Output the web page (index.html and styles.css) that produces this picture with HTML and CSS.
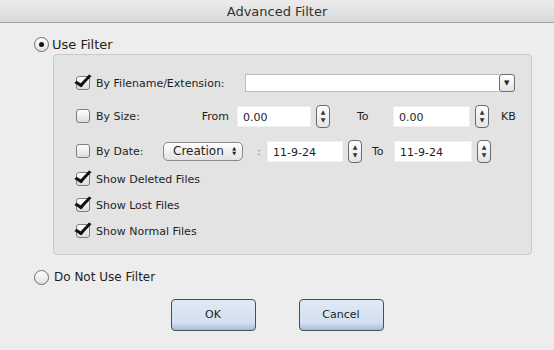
FILE: index.html
```html
<!DOCTYPE html>
<html>
<head>
<meta charset="utf-8">
<title>Advanced Filter</title>
<link rel="stylesheet" href="styles.css">
</head>
<body>
<div class="window">
    <div class="titlebar">Advanced Filter</div>
    <div class="content">
        <div class="radio-row radio-on">
            <span class="radio on"></span><span class="radio-text">Use Filter</span>
        </div>

        <div class="panel">
            <!-- filename -->
            <div class="row row-name">
                <span class="check on"></span>
                <span class="lbl">By Filename/Extension:</span>
                <div class="combo">
                    <span class="combo-field"></span>
                    <span class="combo-btn">&#9660;</span>
                </div>
            </div>
            <!-- size -->
            <div class="row row-size">
                <span class="check"></span>
                <span class="lbl lbl-short">By Size:</span>
                <span class="from">From</span>
                <span class="field field-from">0.00</span>
                <span class="spin"><i>&#9650;</i><i>&#9660;</i></span>
                <span class="to to-size">To</span>
                <span class="field field-to">0.00</span>
                <span class="spin"><i>&#9650;</i><i>&#9660;</i></span>
                <span class="unit">KB</span>
            </div>
            <!-- date -->
            <div class="row row-date">
                <span class="check"></span>
                <span class="lbl lbl-short">By Date:</span>
                <span class="select">Creation<b>&#9650;<br>&#9660;</b></span>
                <span class="colon">:</span>
                <span class="field field-date">11-9-24</span>
                <span class="spin"><i>&#9650;</i><i>&#9660;</i></span>
                <span class="to to-date">To</span>
                <span class="field field-date2">11-9-24</span>
                <span class="spin"><i>&#9650;</i><i>&#9660;</i></span>
            </div>
            <div class="row row-opt first">
                <span class="check on"></span><span class="lbl">Show Deleted Files</span>
            </div>
            <div class="row row-opt">
                <span class="check on"></span><span class="lbl">Show Lost Files</span>
            </div>
            <div class="row row-opt">
                <span class="check on"></span><span class="lbl">Show Normal Files</span>
            </div>
        </div>

        <div class="radio-row radio-off">
            <span class="radio"></span><span class="radio-text">Do Not Use Filter</span>
        </div>

        <div class="buttons">
            <span class="btn">OK</span>
            <span class="btn">Cancel</span>
        </div>
    </div>
</div>
</body>
</html>
```
FILE: styles.css
```css
body{margin:0;padding:0;background:#ececec;font-family:"DejaVu Sans","Liberation Sans",sans-serif;color:#1e1e1e;}
.window{width:554px;height:350px;background:#ededed;overflow:hidden;}

.titlebar{height:22px;line-height:23px;text-align:center;font-size:13px;color:#333;background:linear-gradient(#ececec,#d9d9d9);border-bottom:1px solid #a3a3a3;}

.content{padding:13px 0 0 34px;}

.radio-row{display:flex;align-items:center;height:16px;font-size:12px;}
.radio-on{font-size:13px;}
.radio{display:inline-block;box-sizing:border-box;width:15px;height:15px;border:1px solid #6b6b6b;border-radius:50%;background:linear-gradient(#fff,#e0e0e0);position:relative;margin-right:3px;}
.radio.on:after{content:"";position:absolute;left:4px;top:4px;width:5px;height:5px;border-radius:50%;background:#111;}
.radio-off{margin-top:14px;}
.radio-off .radio{margin-right:5px;}

.panel{box-sizing:border-box;width:479px;height:201px;margin:2px 0 0 19px;background:#e3e3e3;border:1px solid #c9c9c9;border-radius:4px;padding:16px 0 0 22px;font-size:11px;}

.row{display:flex;align-items:center;height:24px;}
.row-size{margin-top:9px;}
.row-date{margin-top:11px;}
.row-opt{height:20px;margin-top:6px;}
.row-opt.first{margin-top:6px;}

.check{display:inline-block;box-sizing:border-box;width:14px;height:14px;border:1px solid #7d7d7d;border-radius:3px;background:linear-gradient(#fff,#dcdcdc);position:relative;margin-right:6px;flex:none;}
.check.on:after{content:"";position:absolute;left:2px;top:-5px;width:5px;height:12px;border:solid #111;border-width:0 3px 3px 0;transform:rotate(33deg) skewX(-10deg);}

.lbl{white-space:nowrap;}
.lbl-short{width:67px;}

.combo{display:flex;margin-left:20px;height:18px;}
.combo-field{width:253px;background:#fff;border:1px solid #bcbcbc;border-right:0;}
.combo-btn{box-sizing:border-box;width:16px;height:18px;border:1px solid #6e6e6e;border-radius:3px;background:linear-gradient(#fff,#e2e2e2);font-size:7px;line-height:16px;text-align:center;color:#222;}

.from{width:66px;text-align:right;padding-right:8px;}
.field{box-sizing:border-box;height:21px;line-height:21px;background:#fff;border:1px solid #f0f0f0;padding-left:5px;font-size:11px;}
.field-from{width:74px;}
.field-to{width:77px;}
.field-date{width:76px;}
.field-date2{width:78px;}

.spin{box-sizing:border-box;width:14px;height:23px;margin-left:5px;border:1px solid #6b6b6b;border-radius:4px;background:linear-gradient(#fff,#e4e4e4);display:flex;flex-direction:column;justify-content:center;align-items:center;font-size:6px;line-height:8px;color:#333;}
.spin i{font-style:normal;}
.row-size .spin:nth-of-type(1){margin-left:6px;}

.to-size{margin-left:27px;width:36px;}
.to-date{margin-left:10px;width:22px;}
.unit{margin-left:12px;}

.select{box-sizing:border-box;width:80px;height:19px;border:1px solid #8a8a8a;border-radius:5px;background:linear-gradient(#fff,#e2e2e2);display:flex;align-items:center;justify-content:space-between;padding:0 6px 0 9px;font-size:12px;}
.select b{font-weight:normal;font-size:5px;line-height:5px;text-align:center;}
.colon{margin-left:14px;width:10px;color:#777;}

.buttons{display:flex;justify-content:center;gap:43px;margin:14px 0 0 -34px;}
.btn{box-sizing:border-box;width:85px;height:32px;line-height:30px;text-align:center;font-size:11px;border:1px solid #4e4e4e;border-radius:4px;background:linear-gradient(#e0e9f5,#d3e0f1 75%,#a7bedb);color:#222;}
```
